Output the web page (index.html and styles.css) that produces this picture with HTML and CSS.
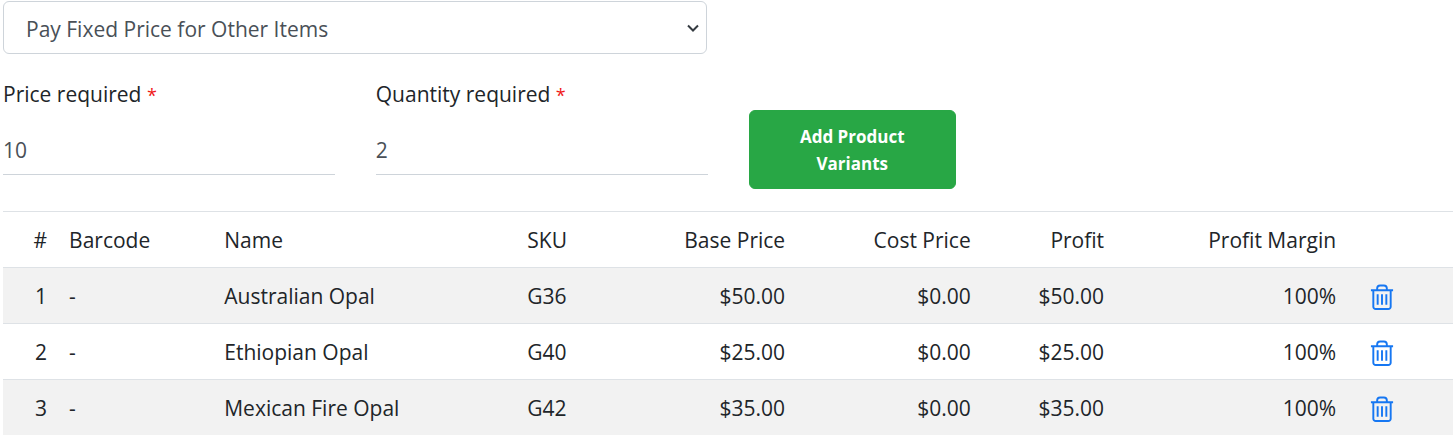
FILE: index.html
```html
<!DOCTYPE html>
<html lang="en">
<head>
    <meta charset="UTF-8">
    <meta name="viewport" content="width=device-width, initial-scale=1.0">
    <title>Pay Fixed Price</title>
    <link rel="stylesheet" href="styles.css">
</head>
<body>
<svg class="sprite" aria-hidden="true">
    <symbol id="trash" viewBox="0 0 24 28">
        <path d="M0.500 6.500H23.500M7 6V4.500A3 3 0 0 1 10 1.500H14A3 3 0 0 1 17 4.500V6M3 6.500V23.500A2.500 2.500 0 0 0 5.500 26H18.500A2.500 2.500 0 0 0 21 23.500V6.500M7.500 10.500V21.500M12 10.500V21.500M16.500 10.500V21.500"/>
    </symbol>
</svg>

<form class="discount-form">
    <select class="discount-type" aria-label="Discount type">
        <option>Pay Fixed Price for Other Items</option>
    </select>

    <div class="field">
        <label for="price">Price required <span class="required">*</span></label>
        <input type="text" id="price" value="10">
    </div>
    <div class="field">
        <label for="quantity">Quantity required <span class="required">*</span></label>
        <input type="text" id="quantity" value="2">
    </div>
    <button type="button" class="btn-add">Add Product Variants</button>
</form>

<table class="variants">
    <thead>
    <tr>
        <th class="col-index num">#</th>
        <th class="col-barcode">Barcode</th>
        <th class="col-name">Name</th>
        <th class="col-sku">SKU</th>
        <th class="col-base num">Base Price</th>
        <th class="col-cost num">Cost Price</th>
        <th class="col-profit num">Profit</th>
        <th class="col-margin num">Profit Margin</th>
        <th class="col-action"></th>
    </tr>
    </thead>
    <tbody>
    <tr>
        <td class="num">1</td>
        <td>-</td>
        <td>Australian Opal</td>
        <td>G36</td>
        <td class="num">$50.00</td>
        <td class="num">$0.00</td>
        <td class="num">$50.00</td>
        <td class="num">100%</td>
        <td><button type="button" class="btn-delete" aria-label="Delete"><svg><use href="#trash"/></svg></button></td>
    </tr>
    <tr>
        <td class="num">2</td>
        <td>-</td>
        <td>Ethiopian Opal</td>
        <td>G40</td>
        <td class="num">$25.00</td>
        <td class="num">$0.00</td>
        <td class="num">$25.00</td>
        <td class="num">100%</td>
        <td><button type="button" class="btn-delete" aria-label="Delete"><svg><use href="#trash"/></svg></button></td>
    </tr>
    <tr>
        <td class="num">3</td>
        <td>-</td>
        <td>Mexican Fire Opal</td>
        <td>G42</td>
        <td class="num">$35.00</td>
        <td class="num">$0.00</td>
        <td class="num">$35.00</td>
        <td class="num">100%</td>
        <td><button type="button" class="btn-delete" aria-label="Delete"><svg><use href="#trash"/></svg></button></td>
    </tr>
    </tbody>
</table>
</body>
</html>
```

FILE: styles.css
```css
* {
    box-sizing: border-box;
}
body {
    margin: 0;
    padding: 1px 3px;
    font-family: "Open Sans", "Noto Sans", sans-serif;
    font-size: 21px;
    line-height: 33px;
    color: #212529;
    background-color: #fff;
}
input, select, button {
    font: inherit;
}
.sprite {
    display: none;
}

/* form */
.discount-form {
    display: grid;
    grid-template-columns: repeat(12, minmax(0, 1fr));
    column-gap: 41px;
    row-gap: 24px;
    margin-bottom: 22px;
}
.discount-type {
    grid-column: 1 / span 6;
    margin-right: 1px;
    padding: 11px 22px 7px;
    border: 1px solid #ced4da;
    border-radius: 6px;
    color: #495057;
    background: #fff url("data:image/svg+xml,%3Csvg xmlns='http://www.w3.org/2000/svg' viewBox='0 0 12 8'%3E%3Cpath d='M1 1.500l5 5 5-5' fill='none' stroke='%23343a40' stroke-width='2'/%3E%3C/svg%3E") no-repeat right 7px center / 12px 8px;
    appearance: none;
}
.field {
    grid-column: 1 / span 3;
}
.field + .field {
    grid-column: 4 / span 3;
}
.field label {
    display: block;
}
.field input {
    display: block;
    width: 100%;
    margin-top: 11px;
    padding: 11px 0 7px;
    border: 0;
    border-bottom: 1px solid #ced4da;
    color: #495057;
    background: none;
}
.required {
    font-size: 18px;
    color: #f01818;
}
.btn-add {
    grid-column: 7 / span 2;
    align-self: end;
    margin-top: 32px;
    padding: 12px 40px 11px;
    border: 1px solid #28a745;
    border-radius: 6px;
    font-size: 17px;
    font-weight: 700;
    line-height: 27px;
    color: #fff;
    background-color: #28a745;
}

/* variants table */
.variants {
    width: 100%;
    table-layout: fixed;
    border-collapse: collapse;
}
.variants th,
.variants td {
    padding: 12px 11px 10px;
    border-top: 1px solid #dee2e6;
    font-weight: 400;
    text-align: left;
    white-space: nowrap;
}
.variants .num {
    text-align: right;
}
.variants tbody tr:nth-child(odd) {
    background-color: #f2f2f2;
}
.col-index { width: 3.8%; }
.col-barcode { width: 10.7%; }
.col-name { width: 20.9%; }
.col-sku { width: 8%; }
.col-base { width: 11.3%; }
.col-cost { width: 12.8%; }
.col-profit { width: 9.2%; }
.col-margin { width: 16%; }
.btn-delete {
    display: flex;
    margin: 0 12px;
    padding: 4px 0 2px;
    border: 0;
    background: none;
}
.btn-delete svg {
    width: 24px;
    height: 27px;
    fill: none;
    stroke: #1677f2;
    stroke-width: 2;
}
```
